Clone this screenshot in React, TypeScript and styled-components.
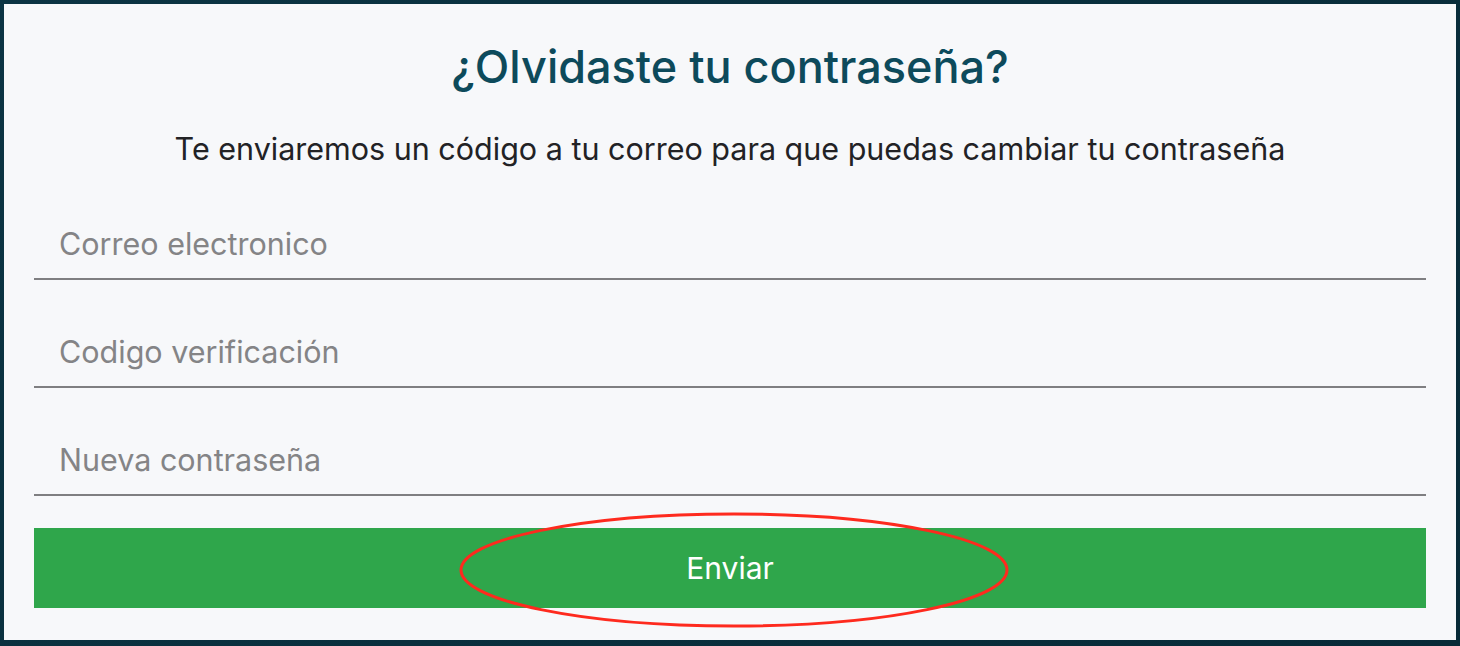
import React from "react";
import styled, { createGlobalStyle } from "styled-components";

const GlobalStyle = createGlobalStyle`
  html, body {
    margin: 0;
    padding: 0;
    background: #0a3140;
  }
  * { box-sizing: border-box; }
`;

const Frame = styled.div`
  width: 1460px;
  height: 646px;
  padding: 4px 4px 6px 4px;
  background: linear-gradient(135deg, #0b3443 0%, #072a37 100%);
`;

const Panel = styled.div`
  position: relative;
  height: 100%;
  background: #f7f8fa;
  padding: 36px 30px 0 30px;
  display: flex;
  flex-direction: column;
  font-family: Inter, "Noto Sans", sans-serif;
`;

const Title = styled.h1`
  margin: 0;
  font-size: 45px;
  line-height: 54px;
  font-weight: 500;
  color: #0d4a5b;
  text-align: center;
`;

const Subtitle = styled.p`
  margin: 37px 0 0;
  font-size: 30.5px;
  line-height: 36px;
  font-weight: 400;
  color: #222225;
  text-align: center;
`;

const Form = styled.form`
  margin-top: 41px;
  display: flex;
  flex-direction: column;
  gap: 36px;
`;

const Field = styled.input`
  display: block;
  width: 100%;
  height: 72px;
  border: none;
  border-bottom: 2px solid #7f7f81;
  background: transparent;
  padding: 0 0 0 25px;
  font-family: Inter, "Noto Sans", sans-serif;
  font-size: 30.5px;
  color: #222;
  outline: none;
  &::placeholder {
    color: #848486;
  }
`;

const Submit = styled.button`
  margin-top: -4px;
  height: 80px;
  width: 100%;
  border: none;
  background: #2fa64b;
  color: #ffffff;
  font-family: Inter, "Noto Sans", sans-serif;
  font-size: 30px;
  font-weight: 400;
  cursor: pointer;
`;

const Annotation = styled.svg`
  position: absolute;
  left: 452px;
  top: 504px;
  pointer-events: none;
`;

export default function App() {
  return (
    <>
      <GlobalStyle />
      <Frame>
        <Panel>
          <Title>¿Olvidaste tu contraseña?</Title>
          <Subtitle>
            Te enviaremos un código a tu correo para que puedas cambiar tu contraseña
          </Subtitle>
          <Form onSubmit={(e) => e.preventDefault()}>
            <Field type="email" placeholder="Correo electronico" />
            <Field type="text" placeholder="Codigo verificación" />
            <Field type="password" placeholder="Nueva contraseña" />
            <Submit type="submit">Enviar</Submit>
          </Form>
          <Annotation width="560" height="126" viewBox="0 0 560 126">
            <ellipse
              cx="278"
              cy="62"
              rx="273"
              ry="56"
              fill="none"
              stroke="#fe2a1e"
              strokeWidth="3"
            />
          </Annotation>
        </Panel>
      </Frame>
    </>
  );
}
